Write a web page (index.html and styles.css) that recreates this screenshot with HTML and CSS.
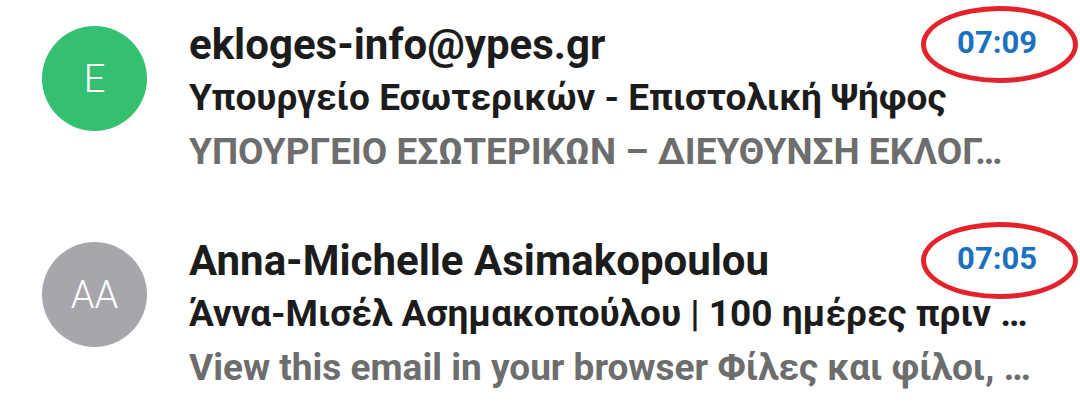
FILE: index.html
```html
<!DOCTYPE html>
<html lang="el">
<head>
  <meta charset="UTF-8"/>
  <meta name="viewport" content="width=device-width, initial-scale=1.0"/>
  <title>Εισερχόμενα</title>
  <link rel="stylesheet" href="styles.css">
</head>
<body>
  <ul class="mail-list">
    <!-- πρώτο μήνυμα -->
    <li class="mail-item">
      <div class="avatar green">E</div>
      <div class="mail-body">
        <div class="mail-head">
          <span class="sender">ekloges-info@ypes.gr</span>
          <span class="time marked">07:09</span>
        </div>
        <div class="subject">Υπουργείο Εσωτερικών - Επιστολική Ψήφος</div>
        <div class="preview">ΥΠΟΥΡΓΕΙΟ ΕΣΩΤΕΡΙΚΩΝ – ΔΙΕΥΘΥΝΣΗ ΕΚΛΟΓ…</div>
      </div>
    </li>
    <!-- δεύτερο μήνυμα -->
    <li class="mail-item">
      <div class="avatar grey">AA</div>
      <div class="mail-body">
        <div class="mail-head">
          <span class="sender">Anna-Michelle Asimakopoulou</span>
          <span class="time marked">07:05</span>
        </div>
        <div class="subject">Άννα-Μισέλ Ασημακοπούλου | 100 ημέρες πριν …</div>
        <div class="preview">View this email in your browser Φίλες και φίλοι, …</div>
      </div>
    </li>
  </ul>
</body>
</html>
```

FILE: styles.css
```css
* { box-sizing: border-box; font-family: Roboto, 'Noto Sans', sans-serif; }
body { margin: 0; background: #fff; }
.mail-list { list-style: none; margin: 0; padding: 0; }
.mail-item { display: flex; height: 216px; padding: 0 43px 0 42px; }
.avatar { flex: none; width: 105px; height: 105px; margin-top: 26px; border-radius: 50%; color: #fff; font-size: 38px; font-weight: 300; display: flex; align-items: center; justify-content: center; }
.avatar.green { background: #35c071; }
.avatar.grey { background: #a6a6ac; }
.mail-body { flex: 1; min-width: 0; margin-left: 42px; padding-top: 20px; }
.mail-head { display: flex; justify-content: space-between; align-items: flex-start; }
.sender { font-size: 42px; font-weight: 700; line-height: 50px; color: #1c1c1c; white-space: nowrap; }
.time { font-size: 31px; font-weight: 700; line-height: 45px; color: #1b70bf; position: relative; }
.marked::after { content: ""; position: absolute; left: -36px; right: -41px; top: -14px; bottom: -18px; border: 5px solid #e3222b; border-radius: 50%; }
.subject { font-size: 37px; font-weight: 700; line-height: 56px; color: #1c1c1c; white-space: nowrap; overflow: hidden; }
.preview { font-size: 37px; font-weight: 700; line-height: 51px; color: #6d6d6d; white-space: nowrap; overflow: hidden; }
```
